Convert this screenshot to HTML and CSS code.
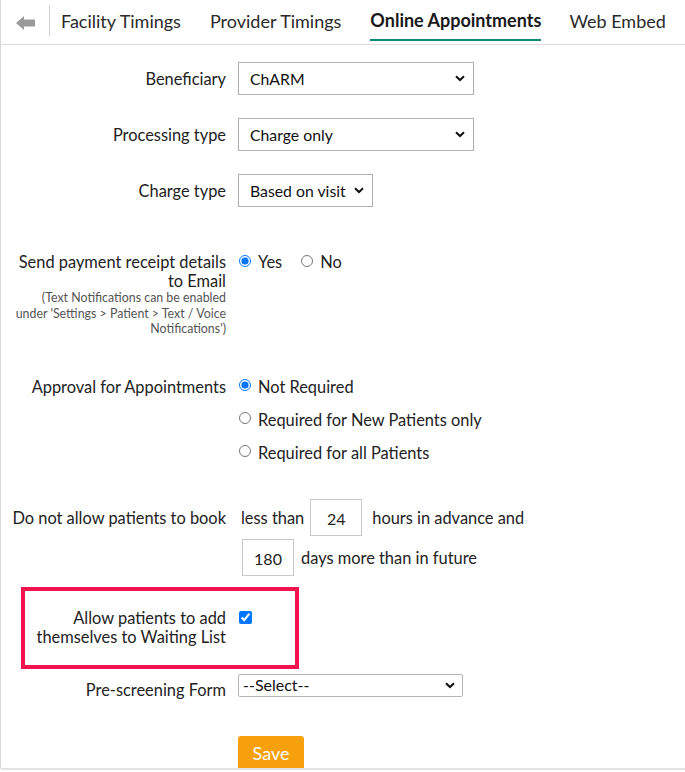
FILE: index.html
```html
<!DOCTYPE html>
<html>
<head>
<meta charset="utf-8">
<link rel="stylesheet" href="styles.css">
</head>
<body>
<div class="page">
  <nav class="tabs">
    <span class="back">
      <svg width="20" height="14" viewBox="0 0 20 14"><path d="M0 7 L8 0 L8 3.5 L19 3.5 L19 10.5 L8 10.5 L8 14 Z" fill="#9a9a9a"/></svg>
    </span>
    <span class="sep"></span>
    <span class="tab">Facility Timings</span>
    <span class="tab">Provider Timings</span>
    <span class="tab active">Online Appointments</span>
    <span class="tab">Web Embed</span>
  </nav>

  <div class="form">
    <div class="row r-benef">
      <label class="lbl mid">Beneficiary</label>
      <div class="select w-wide"><span>ChARM</span><svg class="chev" width="10" height="7" viewBox="0 0 10 7"><path d="M1 1.2 L5 5 L9 1.2" fill="none" stroke="#111" stroke-width="2"/></svg></div>
    </div>

    <div class="row r-proc">
      <label class="lbl mid">Processing type</label>
      <div class="select w-wide"><span>Charge only</span><svg class="chev" width="10" height="7" viewBox="0 0 10 7"><path d="M1 1.2 L5 5 L9 1.2" fill="none" stroke="#111" stroke-width="2"/></svg></div>
    </div>

    <div class="row r-charge">
      <label class="lbl mid">Charge type</label>
      <div class="select w-short"><span>Based on visit</span><svg class="chev" width="10" height="7" viewBox="0 0 10 7"><path d="M1 1.2 L5 5 L9 1.2" fill="none" stroke="#111" stroke-width="2"/></svg></div>
    </div>

    <div class="row r-send">
      <div class="lbl">
        <div>Send payment receipt details<br>to Email</div>
        <div class="note">(Text Notifications can be enabled<br>under 'Settings &gt; Patient &gt; Text / Voice<br>Notifications')</div>
      </div>
      <div class="radios-inline">
        <label class="opt"><input type="radio" name="send" checked> Yes</label>
        <label class="opt"><input type="radio" name="send"> No</label>
      </div>
    </div>

    <div class="row r-appr">
      <label class="lbl">Approval for Appointments</label>
      <div class="radios-col">
        <label class="opt"><input type="radio" name="appr" checked> Not Required</label>
        <label class="opt"><input type="radio" name="appr"> Required for New Patients only</label>
        <label class="opt"><input type="radio" name="appr"> Required for all Patients</label>
      </div>
    </div>

    <div class="row r-book">
      <label class="lbl tall">Do not allow patients to book</label>
      <div class="book">
        <div class="book-line first"><span>less than</span><span class="num">24</span><span>hours in advance and</span></div>
        <div class="book-line"><span class="num">180</span><span>days more than in future</span></div>
      </div>
    </div>

    <div class="highlight">
      <div class="row inner">
        <label class="lbl">Allow patients to add<br>themselves to Waiting List</label>
        <div><input type="checkbox" class="chk" checked></div>
      </div>
    </div>

    <div class="row r-pre">
      <label class="lbl pre">Pre-screening Form</label>
      <div class="select w-pre"><span>--Select--</span><svg class="chev" width="10" height="7" viewBox="0 0 10 7"><path d="M1 1.2 L5 5 L9 1.2" fill="none" stroke="#111" stroke-width="2"/></svg></div>
    </div>

    <div class="row r-save">
      <span></span>
      <div><button class="save">Save</button></div>
    </div>
  </div>
</div>
</body>
</html>
```

FILE: styles.css
```css
html, body {
  margin: 0;
  padding: 0;
  background: #fff;
}
body {
  font-family: Lato, "Open Sans", "Liberation Sans", sans-serif;
  color: #222;
  font-size: 16.4px;
}
.page {
  border-left: 1px solid #d9d9d9;
  border-bottom: 2px solid #e3e3e3;
  border-bottom-left-radius: 3px;
  height: 768px;
  box-sizing: content-box;
  overflow: hidden;
}
.tabs {
  display: flex;
  align-items: center;
  height: 44px;
  border-bottom: 1px solid #dcdcdc;
  position: relative;
}
.back {
  flex: 0 0 auto;
  width: 47px;
  display: flex;
  justify-content: center;
  align-items: center;
  padding-left: 1px;
  padding-top: 1px;
}
.sep {
  flex: 0 0 auto;
  width: 1px;
  height: 31px;
  background: #d0d0d0;
  align-self: flex-start;
  margin-top: 5px;
  margin-right: 11px;
}
.tab {
  flex: 0 0 auto;
  font-size: 18px;
  color: #2a2a2a;
  margin-right: 29px;
  height: 40px;
  line-height: 40px;
  box-sizing: border-box;
  position: relative;
  top: -1px;
  white-space: nowrap;
}
.tab:last-child { margin-right: 0; }
.tab.active {
  font-weight: bold;
  font-size: 18px;
  color: #1a1a1a;
  border-bottom: 2px solid #0e877c;
  line-height: 38px;
  margin-right: 28px;
}
.form {
  display: flex;
  flex-direction: column;
}
.row {
  display: grid;
  grid-template-columns: 225px auto;
  column-gap: 12px;
  align-items: start;
}
.lbl {
  text-align: right;
  line-height: 19px;
}
.lbl.mid {
  align-self: center;
}
.r-benef { margin-top: 17px; }
.r-proc { margin-top: 23px; }
.r-charge { margin-top: 23px; }
.r-send { margin-top: 45px; }
.r-appr { margin-top: 40px; }
.r-book { margin-top: 37px; }
.r-pre { margin-top: 5px; }
.r-save { margin-top: 37px; }

.select {
  display: flex;
  align-items: center;
  justify-content: space-between;
  height: 33px;
  box-sizing: border-box;
  border: 1px solid #aeaeae;
  padding: 0 8px 0 11px;
  font-size: 15.8px;
  color: #111;
  background: #fff;
}
.w-wide { width: 236px; }
.w-short { width: 135px; }
.w-pre {
  width: 225px;
  height: 23px;
  padding: 0 7px 0 4px;
  font-size: 16px;
  border-color: #b5b5b5;
  border-radius: 2px;
}
.w-pre span { position: relative; top: -1px; }

.note {
  font-size: 12.4px;
  line-height: 15.5px;
  color: #555;
}
.opt {
  display: flex;
  align-items: center;
  line-height: 19px;
  color: #222;
}
.opt input {
  margin: 0 7px 0 1px;
  width: 12px;
  height: 12px;
  position: relative;
  top: -1px;
}
.radios-inline {
  display: flex;
  gap: 18px;
}
.radios-col {
  display: flex;
  flex-direction: column;
  gap: 14px;
}
.lbl.tall {
  line-height: 37px;
}
.book {
  display: flex;
  flex-direction: column;
  gap: 3px;
}
.book-line {
  display: flex;
  align-items: center;
  gap: 7px;
  padding-left: 4px;
}
.book-line.first {
  padding-left: 3px;
  gap: 6px;
}
.book-line.first .num { margin-right: 4px; }
.num {
  width: 52px;
  height: 37px;
  box-sizing: border-box;
  border: 1px solid #c9c9c9;
  display: flex;
  align-items: center;
  justify-content: center;
  font-size: 16px;
  color: #222;
  padding-top: 2px;
}
.highlight {
  margin-top: 11px;
  margin-left: 20px;
  width: 278px;
  height: 82px;
  box-sizing: border-box;
  border: 4px solid #f5134f;
}
.row.inner {
  grid-template-columns: 201px auto;
  padding-top: 17px;
  column-gap: 12px;
}
.lbl.pre { padding-top: 6px; }
.chk {
  margin: 3px 0 0 1px;
  width: 13px;
  height: 13px;
}
.save {
  width: 66px;
  height: 34px;
  border: none;
  border-radius: 3px;
  background: #f7a00d;
  color: #fff;
  font-family: Lato, "Open Sans", sans-serif;
  font-size: 18px;
  padding: 0;
}
```
